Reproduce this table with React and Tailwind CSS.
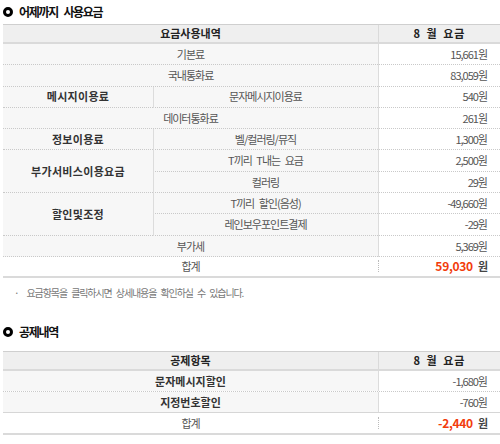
import React from "react";

const F = { fontFamily: '"Noto Sans CJK KR", "Noto Sans", sans-serif' };

function Heading({ children }) {
  return (
    <div className="flex items-center h-[24px] pl-[3px] gap-[6px]">
      <span className="w-[10px] h-[10px] rounded-full border-[3px] border-black box-border" />
      <span className="text-[12px] font-bold text-[#111] tracking-[-1.3px] [word-spacing:4px] leading-none">{children}</span>
    </div>
  );
}

const cellBase = "flex items-center border-b border-dotted border-[#c9c9c9]";
const leftBg = "bg-[#f7f7f7]";
const bodyText = "text-[11px] tracking-[-1px] [word-spacing:3px] text-[#555]";

export default function App() {
  const rows = [
    { type: "span", label: "기본료", v: "15,661원" },
    { type: "span", label: "국내통화료", v: "83,059원" },
    { type: "group", group: "메시지이용료", rs: 1, sub: "문자메시지이용료", v: "540원" },
    { type: "span", label: "데이터통화료", v: "261원" },
    { type: "group", group: "정보이용료", rs: 1, sub: "벨/컬러링/뮤직", v: "1,300원" },
    { type: "group", group: "부가서비스이용요금", rs: 2, sub: "T끼리 T내는 요금", v: "2,500원" },
    { type: "sub", sub: "컬러링", v: "29원" },
    { type: "group", group: "할인및조정", rs: 2, sub: "T끼리 할인(음성)", v: "-49,660원" },
    { type: "sub", sub: "레인보우포인트결제", v: "-29원" },
    { type: "span", label: "부가세", v: "5,369원" },
  ];

  const cells = [];
  rows.forEach((r, i) => {
    if (r.type === "span") {
      cells.push(
        <div key={`l${i}`} className={`${cellBase} ${leftBg} col-span-2 justify-center ${bodyText}`}>
          {r.label}
        </div>
      );
    } else {
      if (r.type === "group") {
        cells.push(
          <div key={`g${i}`} className={`${cellBase} ${leftBg} justify-center text-[11px] font-bold tracking-[0.3px] text-[#333] ${r.rs === 2 ? "row-span-2" : ""}`}>
            {r.group}
          </div>
        );
      }
      cells.push(
        <div key={`s${i}`} className={`${cellBase} ${leftBg} justify-center ${bodyText} relative`}>
          <span className="absolute left-0 top-0 bottom-[-1px] w-px bg-[#dcdcdc]" />
          {r.sub}
        </div>
      );
    }
    cells.push(
      <div key={`v${i}`} className={`${cellBase} justify-end pr-[13px] bg-white ${bodyText} relative`}>
        <span className="absolute left-0 top-0 bottom-[-1px] w-px bg-[#dcdcdc]" />
        {r.v}
      </div>
    );
  });

  return (
    <div className="w-[500px] h-[444px] bg-white overflow-hidden" style={F}>
      <Heading>어제까지 사용요금</Heading>

      <div className="ml-[3px] w-[497px] border-t border-[#cfcfcf]">
        <div className="flex h-[19px] bg-[#efefef] border-b-2 border-[#dadada] text-[11px] font-bold text-[#222]">
          <div className="w-[375px] flex items-center justify-center">요금사용내역</div>
          <div className="flex-1 flex items-center justify-center border-l border-[#dadada] tracking-[1px] [word-spacing:2px]">8 월 요금</div>
        </div>
        <div className="grid grid-cols-[150px_225px_122px] auto-rows-[21.3px]">
          {cells}
        </div>
        <div className="flex h-[21px] border-b-2 border-[#dadada] bg-white">
          <div className={`w-[375px] flex items-center justify-center ${bodyText}`}>합계</div>
          <div className="flex-1 flex items-center justify-between pr-[13px]">
            <span className="h-[12px] border-l border-dotted border-[#bbb]" />
            <span className="flex items-center gap-[5px]">
              <span className="text-[12px] font-bold tracking-[-0.3px] text-[#f23c0c]">59,030</span>
              <span className="text-[11px] text-[#444] font-bold tracking-[-1px]">원</span>
            </span>
          </div>
        </div>
      </div>

      <div className="mt-[7px] flex items-center h-[16px] pl-[14px] text-[10px] tracking-[-1.1px] [word-spacing:3px] text-[#777]">
        <span className="mr-[8px]">·</span>
        <span>요금항목을 클릭하시면 상세내용을 확인하실 수 있습니다.</span>
      </div>

      <div className="mt-[19px]">
        <Heading>공제내역</Heading>
      </div>

      <div className="mt-[7px] ml-[3px] w-[497px] border-t border-[#cfcfcf]">
        <div className="flex h-[19px] bg-[#efefef] border-b-2 border-[#dadada] text-[11px] font-bold text-[#222]">
          <div className="w-[375px] flex items-center justify-center">공제항목</div>
          <div className="flex-1 flex items-center justify-center border-l border-[#dadada] tracking-[1px] [word-spacing:2px]">8 월 요금</div>
        </div>
        <div className="flex h-[21px] border-b border-dotted border-[#c9c9c9]">
          <div className="w-[375px] bg-[#f7f7f7] flex items-center justify-center text-[11px] font-bold text-[#333]">문자메시지할인</div>
          <div className={`flex-1 flex items-center justify-end pr-[13px] border-l border-[#dcdcdc] ${bodyText}`}>-1,680원</div>
        </div>
        <div className="flex h-[21px] border-b border-[#d6d6d6]">
          <div className="w-[375px] bg-[#f7f7f7] flex items-center justify-center text-[11px] font-bold text-[#333]">지정번호할인</div>
          <div className={`flex-1 flex items-center justify-end pr-[13px] border-l border-[#dcdcdc] ${bodyText}`}>-760원</div>
        </div>
        <div className="flex h-[22px] border-b-2 border-[#dadada] bg-white">
          <div className={`w-[375px] flex items-center justify-center ${bodyText}`}>합계</div>
          <div className="flex-1 flex items-center justify-between pr-[13px]">
            <span className="h-[12px] border-l border-dotted border-[#bbb]" />
            <span className="flex items-center gap-[5px]">
              <span className="text-[12px] font-bold tracking-[-0.3px] text-[#f23c0c]">-2,440</span>
              <span className="text-[11px] text-[#444] font-bold tracking-[-1px]">원</span>
            </span>
          </div>
        </div>
      </div>
    </div>
  );
}
